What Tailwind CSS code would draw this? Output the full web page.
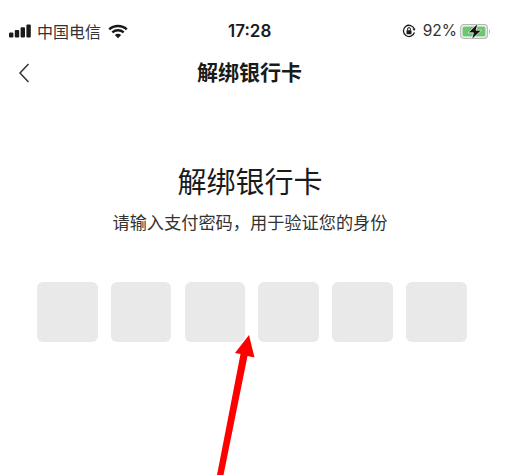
<!DOCTYPE html>
<html lang="zh">
<head>
<meta charset="utf-8">
<script src="https://cdn.jsdelivr.net/npm/@tailwindcss/browser@4"></script>
</head>
<body class="bg-white">
<div class="relative w-[509px] h-[475px] overflow-hidden bg-white text-[#1a1a1a] font-['Noto_Sans_CJK_SC',sans-serif]">
  <div class="relative h-[42px] pt-[20px] flex items-center justify-between pl-[9px] pr-[17px]">
    <div class="flex items-center">
      <svg width="22" height="14" viewBox="0 0 22 14" class="mr-[6px]"><g fill="#1a1a1a"><rect x="0" y="8.500" width="4.400" height="5" rx="1.200"/><rect x="5.800" y="6" width="4.400" height="7.500" rx="1"/><rect x="11.600" y="3.200" width="4.400" height="10.300" rx="1"/><rect x="17.400" y="0.500" width="4.400" height="13" rx="1"/></g></svg>
      <span class="text-[16px] leading-[20px] text-[#333] w-[64px] whitespace-nowrap">中国电信</span>
      <svg width="20" height="15" viewBox="0 0 20 15" class="ml-[7px]" fill="none" stroke="#1a1a1a" stroke-width="2.400"><path d="M1.200 5.300C6 .8 14 .8 18.800 5.300"/><path d="M4.300 8.300C7.500 5.500 12.500 5.500 15.700 8.300"/><path d="M10 14.200L6.800 11C8.800 9.400 11.200 9.400 13.200 11Z" fill="#1a1a1a" stroke="none"/></svg>
    </div>
    <span class="absolute left-[228px] top-[21px] text-[17px] leading-[20px] font-semibold font-['Inter',sans-serif] whitespace-nowrap">17:28</span>
    <div class="flex items-center">
      <svg width="14" height="14" viewBox="0 0 14 14" class="mr-[7px]"><path d="M12.400 8.500A5.600 5.600 0 1 1 12.300 5" fill="none" stroke="#1a1a1a" stroke-width="1.300"/><path d="M10.600 4.800h3l-1.500 2.200z" fill="#1a1a1a"/><rect x="4.500" y="6.200" width="5" height="4" rx=".6" fill="#1a1a1a"/><path d="M5.600 6.400V5a1.400 1.400 0 0 1 2.800 0v1.400" fill="none" stroke="#1a1a1a"/></svg>
      <span class="text-[15.500px] leading-[20px] text-[#333] font-['Inter',sans-serif] whitespace-nowrap">92%</span>
      <svg width="32" height="17" viewBox="0 0 32 17" class="ml-[3px]"><rect x=".7" y="1.700" width="26.600" height="13.600" rx="3" fill="none" stroke="#b5b5b5" stroke-width="1.200"/><rect x="2.500" y="3.500" width="23" height="10" rx="1.500" fill="#6cc870"/><path d="M29 6c1.300.4 1.300 4.600 0 5z" fill="#b5b5b5"/><path d="M18 .3L8 9.800H13.500L11.500 16.700L21.500 7.200H16Z" fill="#111" stroke="#fff" stroke-width=".7"/></svg>
    </div>
  </div>
  <div class="relative h-[62px] pb-[4px] flex items-center justify-center pr-[10px]">
    <svg width="12" height="20" viewBox="0 0 12 20" class="absolute left-[18px] top-[21px]" fill="none" stroke="#333" stroke-width="1.500"><path d="M10.500 1L2 10L10.500 19"/></svg>
    <span class="text-[21px] leading-[30px] font-semibold">解绑银行卡</span>
  </div>
  <div class="flex flex-col items-center pt-[56px] pr-[9px]">
    <h1 class="text-[29px] leading-[40px] font-normal">解绑银行卡</h1>
    <p class="mt-[10px] text-[17.200px] leading-[24px] text-[#333] whitespace-nowrap">请输入支付密码&#xFF0C;用于验证您的身份</p>
  </div>
  <div class="mt-[48px] ml-[37px] flex gap-[13.200px]">
    <div class="w-[60.600px] h-[60px] rounded-md bg-[#e9e9e9]"></div>
    <div class="w-[60.600px] h-[60px] rounded-md bg-[#e9e9e9]"></div>
    <div class="w-[60.600px] h-[60px] rounded-md bg-[#e9e9e9]"></div>
    <div class="w-[60.600px] h-[60px] rounded-md bg-[#e9e9e9]"></div>
    <div class="w-[60.600px] h-[60px] rounded-md bg-[#e9e9e9]"></div>
    <div class="w-[60.600px] h-[60px] rounded-md bg-[#e9e9e9]"></div>
  </div>
  <svg width="80" height="150" viewBox="0 0 80 150" class="absolute left-[190px] top-[330px]"><path d="M59 5L64.500 27.500L57.500 26L33.500 145H27L50.500 24L45 23Z" fill="#fe0000"/></svg>
</div>
</body>
</html>
